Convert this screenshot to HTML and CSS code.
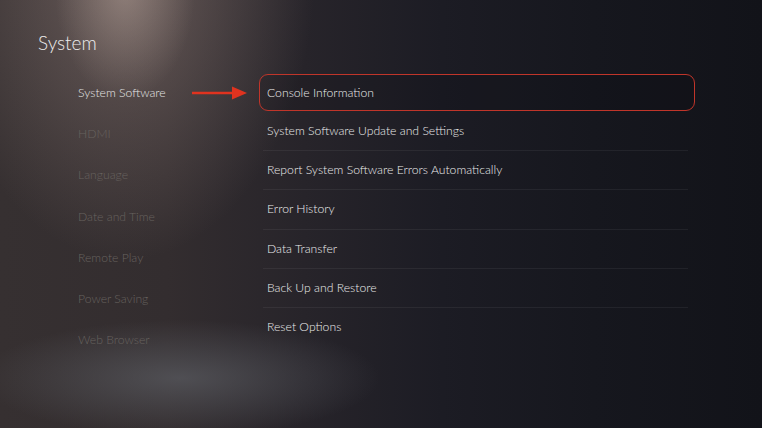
FILE: index.html
```html
<!DOCTYPE html>
<html>
<head>
<meta charset="utf-8">
<link rel="stylesheet" href="styles.css">
</head>
<body>
<div class="screen">
  <h1 class="title">System</h1>
  <div class="content">
    <ul class="nav">
      <li class="nav-item active">System Software</li>
      <li class="nav-item">HDMI</li>
      <li class="nav-item">Language</li>
      <li class="nav-item">Date and Time</li>
      <li class="nav-item">Remote Play</li>
      <li class="nav-item">Power Saving</li>
      <li class="nav-item">Web Browser</li>
    </ul>
    <ul class="list">
      <li class="list-item focused">Console Information</li>
      <li class="list-item">System Software Update and Settings</li>
      <li class="list-item">Report System Software Errors Automatically</li>
      <li class="list-item">Error History</li>
      <li class="list-item">Data Transfer</li>
      <li class="list-item">Back Up and Restore</li>
      <li class="list-item last">Reset Options</li>
    </ul>
    <svg class="arrow" width="56" height="14" viewBox="0 0 56 14">
      <line x1="0" y1="7" x2="43" y2="7" stroke="#e0331f" stroke-width="2.6"/>
      <polygon points="40,0.5 55,7 40,13.5" fill="#e0331f"/>
    </svg>
  </div>
</div>
</body>
</html>
```
FILE: styles.css
```css
html, body {
  margin: 0;
  padding: 0;
  background: #ffffff;
}
body {
  width: 762px;
  height: 430px;
  overflow: hidden;
  font-family: Lato, "Open Sans", sans-serif;
}
.screen {
  width: 762px;
  height: 428px;
  box-sizing: border-box;
  padding: 30px 0 0 38px;
  background:
    radial-gradient(ellipse 70px 110px at 125px -10px, rgba(190,170,160,0.45), rgba(190,170,160,0) 100%),
    radial-gradient(ellipse 190px 290px at 125px -30px, rgba(150,130,125,0.55), rgba(150,130,125,0) 100%),
    radial-gradient(ellipse 200px 58px at 180px 378px, rgba(95,97,103,0.65), rgba(95,97,103,0) 100%),
    linear-gradient(90deg, #363031 0%, #332d2f 22%, #27242a 40%, #1c1c24 58%, #16171e 78%, #121319 100%);
}
.title {
  margin: 0;
  font-weight: 300;
  font-size: 19px;
  line-height: 26px;
  color: #ececec;
}
.content {
  position: relative;
  display: flex;
  margin-top: 18px;
  margin-left: 40px;
}
.nav {
  list-style: none;
  margin: 0;
  padding: 0;
  width: 181px;
}
.nav-item {
  height: 41.2px;
  line-height: 38px;
  font-size: 12.2px;
  color: #67625f;
  font-weight: 300;
}
.nav-item.active {
  color: #e6e6e6;
}
.list {
  list-style: none;
  margin: 0;
  padding: 0;
  width: 436px;
}
.list-item {
  height: 38.2px;
  line-height: 38px;
  font-size: 12.2px;
  font-weight: 300;
  color: #ececec;
  border-bottom: 1px solid rgba(255,255,255,0.06);
  margin: 0 7px 0 4px;
  padding-left: 4px;
}
.list-item.last {
  border-bottom: none;
}
.list-item.focused {
  margin: 0 0 1px 0;
  padding-left: 7px;
  border: 1.5px solid #c0352a;
  border-radius: 9px;
  height: 35px;
  line-height: 35px;
  background: rgba(10,10,16,0.15);
}
.arrow {
  position: absolute;
  left: 114px;
  top: 12px;
}
```
